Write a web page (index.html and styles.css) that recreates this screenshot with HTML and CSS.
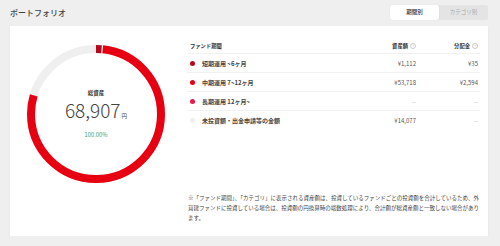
FILE: index.html
```html
<!DOCTYPE html>
<html lang="ja">
<head>
    <meta charset="UTF-8">
    <title>ポートフォリオ</title>
    <link rel="stylesheet" href="styles.css">
</head>
<body>
    <header class="top">
        <h1>ポートフォリオ</h1>
        <div class="tabs">
            <span class="tab active">期間別</span>
            <span class="tab">カテゴリ別</span>
        </div>
    </header>

    <section class="card">
        <div class="chart">
            <svg class="donut" width="140" height="140" viewBox="0 0 140 140">
                <g transform="rotate(-90 70 70)">
                    <circle cx="70" cy="70" r="65" fill="none" stroke="#efefef" stroke-width="8"/>
                    <circle cx="70" cy="70" r="65" fill="none" stroke="#b5081e" stroke-width="8"
                            stroke-dasharray="5.6 402.8" stroke-dashoffset="0"/>
                    <circle cx="70" cy="70" r="65" fill="none" stroke="#e60012" stroke-width="8"
                            stroke-dasharray="318 90.4" stroke-dashoffset="-6.8"/>
                </g>
            </svg>
            <div class="total">
                <p class="total-label">総資産</p>
                <p class="total-value">68,907<span>円</span></p>
                <p class="total-rate">100.00%</p>
            </div>
        </div>

        <div class="detail">
            <div class="table">
                <div class="row head">
                    <span>ファンド期間</span>
                    <span class="num">資産額<i class="help">?</i></span>
                    <span class="num">分配金<i class="help">?</i></span>
                </div>
                <div class="row">
                    <span class="name"><b class="dot short"></b>短期運用 ~6ヶ月</span>
                    <span class="num">¥1,112</span>
                    <span class="num">¥35</span>
                </div>
                <div class="row">
                    <span class="name"><b class="dot mid"></b>中期運用 7~12ヶ月</span>
                    <span class="num">¥53,718</span>
                    <span class="num">¥2,594</span>
                </div>
                <div class="row">
                    <span class="name"><b class="dot long"></b>長期運用 12ヶ月~</span>
                    <span class="num muted">--</span>
                    <span class="num muted">--</span>
                </div>
                <div class="row last">
                    <span class="name"><b class="dot none"></b>未投資額・出金申請等の金額</span>
                    <span class="num">¥14,077</span>
                    <span class="num muted">--</span>
                </div>
            </div>

            <p class="note">※「ファンド期間」、「カテゴリ」に表示される資産額は、投資しているファンドごとの投資額を合計しているため、外貨建ファンドに投資している場合は、投資額の円換算時の端数処理により、合計額が総資産額と一致しない場合があります。</p>
        </div>
    </section>
</body>
</html>
```

FILE: styles.css
```css
body {
    margin: 0;
    background-color: #efefef;
    font-family: "Noto Sans CJK JP", "Noto Sans", sans-serif;
    color: #333;
}

p {
    margin: 0;
}

.top {
    display: flex;
    justify-content: space-between;
    align-items: center;
    padding: 5px 12px 0 10px;
    height: 15px;
}

.top h1 {
    margin: 0;
    font-size: 8px;
    font-weight: 500;
    color: #444;
}

.tabs {
    display: flex;
    background-color: #e4e4e4;
    border-radius: 2px;
}

.tab {
    width: 49px;
    height: 15px;
    line-height: 15px;
    text-align: center;
    font-size: 5.5px;
    color: #aaa;
}

.tab.active {
    background-color: #fff;
    color: #333;
    font-weight: 500;
    border-radius: 2px;
    box-shadow: 0 0 1px rgba(0, 0, 0, 0.15);
}

.card {
    display: flex;
    margin: 6px 12px 0 10px;
    height: 210px;
    background-color: #fff;
    box-shadow: 0 1px 2px rgba(0, 0, 0, 0.06);
}

.chart {
    display: grid;
    width: 177px;
    flex-shrink: 0;
    align-self: flex-start;
    padding: 18px 0 0 16px;
    box-sizing: border-box;
}

.donut,
.total {
    grid-area: 1 / 1;
}

.total {
    width: 140px;
    height: 140px;
    display: flex;
    flex-direction: column;
    align-items: center;
    justify-content: center;
}

.total-label {
    font-size: 5.5px;
    font-weight: 700;
}

.total-value {
    font-size: 19px;
    font-weight: 300;
    color: #444;
    line-height: 24px;
    margin-top: 1px;
}

.total-value span {
    font-size: 5.5px;
    font-weight: 400;
    margin-left: 1px;
}

.total-rate {
    font-size: 5.8px;
    color: #4c9a5e;
    margin-top: 2px;
}

.detail {
    flex: 1;
    display: flex;
    flex-direction: column;
    padding: 12px 8px 13px 0;
}

.row {
    display: grid;
    grid-template-columns: 1fr 80px 62px;
    align-items: center;
    height: 19px;
    font-size: 6px;
    border-bottom: 1px solid #f1f1f1;
    box-sizing: border-box;
}

.row.head {
    height: 16px;
    font-size: 5.3px;
    font-weight: 700;
    padding-left: 3px;
}

.row.last {
    border-bottom: none;
}

.num {
    text-align: right;
    padding-right: 2px;
    color: #555;
}

.head .num {
    color: #333;
}

.muted {
    color: #aaa;
}

.name {
    display: flex;
    align-items: center;
    font-weight: 600;
    color: #444;
}

.dot {
    width: 5px;
    height: 5px;
    border-radius: 50%;
    margin: 0 7px 0 3px;
}

.dot.short { background-color: #b5081e; }
.dot.mid { background-color: #e60012; }
.dot.long { background-color: #e8194b; }
.dot.none { background-color: #eeeeee; }

.help {
    display: inline-block;
    width: 4px;
    height: 4px;
    margin-left: 2px;
    border: 0.5px solid #ccc;
    border-radius: 50%;
    font-size: 3px;
    line-height: 4px;
    text-align: center;
    font-style: normal;
    color: #bbb;
    vertical-align: 1px;
}

.note {
    margin-top: auto;
    font-size: 5.5px;
    line-height: 10px;
    color: #444;
    padding-left: 1px;
}
```
